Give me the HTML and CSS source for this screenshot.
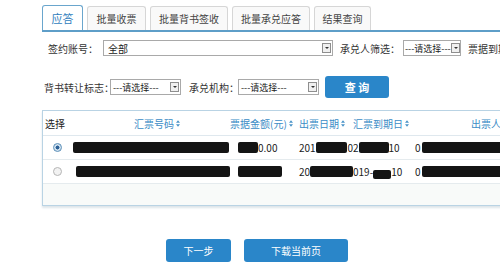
FILE: index.html
```html
<!DOCTYPE html>
<html>
<head>
<meta charset="utf-8">
<link rel="stylesheet" href="styles.css">
</head>
<body>
<div class="page">
  <div class="tabs">
    <div class="tab active w1">应答</div>
    <div class="tab w2">批量收票</div>
    <div class="tab w3">批量背书签收</div>
    <div class="tab w3">批量承兑应答</div>
    <div class="tab w4">结果查询</div>
  </div>

  <div class="row row1">
    <span class="label l1">签约账号：</span>
    <div class="select s1"><span>全部</span><i class="arrow"></i></div>
    <span class="label l2">承兑人筛选：</span>
    <div class="select s2"><span>---请选择---</span><i class="arrow"></i></div>
    <span class="label l3">票据到期</span>
  </div>

  <div class="row row2">
    <span class="label l4">背书转让标志：</span>
    <div class="select s3"><span>---请选择---</span><i class="arrow"></i></div>
    <span class="label l5">承兑机构：</span>
    <div class="select s4"><span>---请选择---</span><i class="arrow"></i></div>
    <button class="btn query">查 询</button>
  </div>

  <div class="tablebox">
    <div class="thead">
      <div class="c c0 dark">选择</div>
      <div class="c c1">汇票号码<svg class="sort" viewBox="0 0 6 10"><path d="M3 0L6 4H0Z M3 10L6 6H0Z"/></svg></div>
      <div class="c c2">票据金额(元)<svg class="sort" viewBox="0 0 6 10"><path d="M3 0L6 4H0Z M3 10L6 6H0Z"/></svg></div>
      <div class="c c3">出票日期<svg class="sort" viewBox="0 0 6 10"><path d="M3 0L6 4H0Z M3 10L6 6H0Z"/></svg></div>
      <div class="c c4">汇票到期日<svg class="sort" viewBox="0 0 6 10"><path d="M3 0L6 4H0Z M3 10L6 6H0Z"/></svg></div>
      <div class="c c5">出票人</div>
    </div>
    <div class="trow">
      <div class="c c0"><span class="radio on"></span></div>
      <div class="c c1"><span class="blot b1"></span></div>
      <div class="c c2"><span class="blot b2"></span>0.00</div>
      <div class="c c3">201<span class="blot b3"></span>0</div>
      <div class="c c4">2<span class="blot b4"></span>10</div>
      <div class="c c5 d">0<span class="blot b5"></span></div>
    </div>
    <div class="trow">
      <div class="c c0"><span class="radio"></span></div>
      <div class="c c1"><span class="blot b6"></span></div>
      <div class="c c2"><span class="blot b7"></span></div>
      <div class="c c3">20<span class="blot b8"></span></div>
      <div class="c c4">019-<span class="blot b9"></span>10</div>
      <div class="c c5 d">0<span class="blot b5"></span></div>
    </div>
    <div class="tfill"></div>
  </div>

  <div class="actions">
    <button class="btn next">下一步</button>
    <button class="btn down">下载当前页</button>
  </div>
</div>
</body>
</html>
```

FILE: styles.css
```css
html, body {
  margin: 0;
  padding: 0;
  background: #fff;
  overflow: hidden;
  width: 500px;
  height: 267px;
}
body {
  font-family: "Noto Sans CJK SC", "Liberation Sans", sans-serif;
  font-size: 10px;
  color: #333;
}
.page {
  padding-left: 42px;
  width: 458px;
  overflow: hidden;
}
.tabs {
  display: flex;
  gap: 4px;
  margin-top: 5px;
  height: 25px;
  border-bottom: 2px solid #5e9ec8;
  align-items: flex-end;
}
.tab {
  flex: none;
  height: 24px;
  box-sizing: border-box;
  border: 1px solid #d6d6d6;
  border-bottom: none;
  border-radius: 3px 3px 0 0;
  background: #f9f9f9;
  display: flex;
  align-items: center;
  justify-content: center;
  color: #444;
}
.tab.active {
  height: 25px;
  background: #fff;
  border-color: #6aa6cd;
  color: #2f7dbd;
  font-size: 11px;
}
.w1 { width: 41px; }
.w2 { width: 59px; }
.w3 { width: 78px; }
.w4 { width: 57px; }

.row {
  display: flex;
  align-items: center;
  white-space: nowrap;
}
.row > * { flex: none; }
.row1 { margin-top: 8px; height: 16px; }
.row2 { margin-top: 20px; height: 22px; }
.label { color: #333; }
.l1 { margin-left: 6px; width: 55px; }
.l2 { margin-left: 7px; width: 63px; }
.l3 { margin-left: 7px; }
.l4 { margin-left: 2px; width: 66px; }
.l5 { margin-left: 8px; width: 49px; }

.select {
  height: 16px;
  box-sizing: border-box;
  border: 1px solid #a9a9a9;
  background: #fff;
  display: flex;
  align-items: center;
  justify-content: space-between;
  padding: 0 1px 0 4px;
  color: #222;
  font-size: 9px;
  white-space: nowrap;
}
.s1 { width: 230px; font-size: 10px; }
.s2 { width: 58px; padding-left: 1px; }
.s3 { width: 71px; padding-left: 2px; }
.s4 { width: 81px; padding-left: 2px; }
.arrow {
  width: 9px;
  height: 10px;
  flex: none;
  box-sizing: border-box;
  border: 1px solid #8e8e8e;
  background: #f0f0f0;
  position: relative;
  display: block;
}
.arrow::after {
  content: "";
  position: absolute;
  left: 2px;
  top: 3px;
  border-left: 2px solid transparent;
  border-right: 2px solid transparent;
  border-top: 2px solid #333;
}

.btn {
  border: none;
  border-radius: 3px;
  background: #2a86c9;
  color: #fff;
  font-family: inherit;
  font-size: 10px;
  padding: 0;
}
.query {
  width: 64px;
  height: 22px;
  margin-left: 6px;
  font-size: 11px;
  font-weight: bold;
}

.tablebox {
  margin-top: 12px;
  width: 470px;
  border: 1px solid #b9d3e4;
  background: #f8faf9;
  box-shadow: 0 2px 2px #dde5ea;
}
.thead, .trow {
  display: flex;
  align-items: center;
  white-space: nowrap;
}
.thead > *, .trow > * { flex: none; }
.thead {
  height: 24px;
  background: #fff;
  border-bottom: 1px solid #dfe8ee;
  color: #3b8cc6;
}
.trow {
  height: 23px;
  background: #fff;
  border-bottom: 1px solid #e5ebee;
  color: #222;
}
.c { display: flex; align-items: center; overflow: visible; }
.c0 { width: 29px; padding-left: 2px; box-sizing: border-box; }
.c1 { width: 158px; justify-content: center; }
.c2 { width: 69px; }
.c3 { width: 54px; }
.c4 { width: 60px; }
.c5 { width: 100px; padding-left: 58px; box-sizing: border-box; }
.c5.d { padding-left: 2px; }
.dark { color: #222; }
.thead .c1 { padding-left: 12px; box-sizing: border-box; }
.sort {
  width: 4px;
  height: 7px;
  margin-left: 2px;
  fill: #4a93c8;
}
.radio {
  width: 7px;
  height: 7px;
  border-radius: 50%;
  border: 1px solid #b5b5b5;
  background: #f2f2f2;
  margin-left: 8px;
  display: block;
}
.radio.on {
  border-color: #5b8fb8;
  background: radial-gradient(circle, #2b5f95 0 35%, #cfe0ee 45%);
}
.blot {
  display: inline-block;
  background: #141414;
  height: 11px;
  border-radius: 2px;
}
.b1 { width: 156px; margin-left: 0; }
.b2 { width: 20px; margin-left: 8px; }
.b3 { width: 33px; }
.b4 { width: 30px; }
.b5 { width: 82px; margin-left: 1px; }
.b6 { width: 162px; margin-left: 4px; }
.b7 { width: 44px; margin-left: 8px; }
.b8 { width: 48px; }
.b9 { width: 18px; height: 9px; margin-top: 6px; }
.tfill { height: 21px; }

.actions {
  display: flex;
  gap: 13px;
  margin-top: 33px;
  padding-left: 124px;
}
.next { width: 65px; height: 23px; }
.down { width: 104px; height: 23px; }
```
